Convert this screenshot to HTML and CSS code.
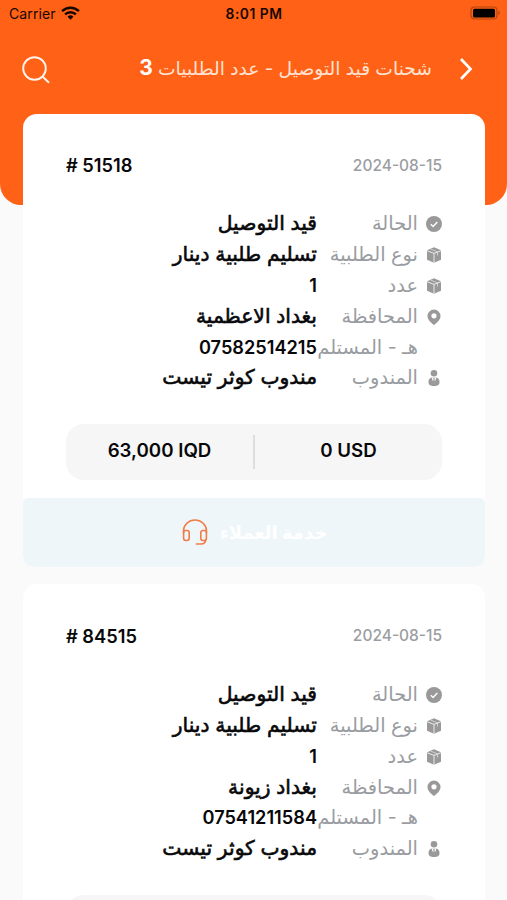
FILE: index.html
```html
<!DOCTYPE html>
<html lang="ar" dir="rtl">
<head>
<meta charset="utf-8">
<meta name="viewport" content="width=device-width">
<title>شحنات قيد التوصيل</title>
<link rel="stylesheet" href="styles.css">
</head>
<body>
<svg class="defs" aria-hidden="true">
  <symbol id="check" viewBox="0 0 16 16"><circle cx="8" cy="8" r="8" fill="#999"/><path d="M4.800 8.200l2.300 2.200 4.200-4.500" fill="none" stroke="#fff" stroke-width="1.400"/></symbol>
  <symbol id="box" viewBox="0 0 16 16"><path d="M8 .3L15 3.200v9.500L8 15.800 1 12.700V3.200z" fill="#999"/><path d="M1 3.700l7 2.700 7-2.700M8 6.400v9.400" fill="none" stroke="#f4f4f4" stroke-width=".9"/><path d="M4.500 2l7 2.900v3.600" fill="none" stroke="#ddd" stroke-width=".8"/></symbol>
  <symbol id="pin" viewBox="0 0 16 16"><path fill-rule="evenodd" d="M8 .5a6.500 6.500 0 0 1 6.500 6.500c0 4-3.800 7-6.500 9-2.700-2-6.500-5-6.500-9A6.500 6.500 0 0 1 8 .5zm0 3.700a2.600 2.600 0 1 0 0 5.200 2.600 2.600 0 0 0 0-5.200z" fill="#999"/></symbol>
  <symbol id="agent" viewBox="0 0 16 16"><circle cx="8" cy="3.300" r="3.300" fill="#999"/><path d="M5.700 7.500h4.600c2 .5 3.200 2 3.200 4.500 0 3-2 4-5.500 4s-5.500-1-5.500-4c0-2.500 1.200-4 3.200-4.500z" fill="#999"/><path d="M5.500 7.400L8 14l2.500-6.600z" fill="#fff"/><path d="M7.200 8h1.600l-.3 1.500.7 3.300L8 14.500l-1.200-1.700.7-3.300z" fill="#999"/></symbol>
</svg>

<header class="header">
  <div class="status" dir="ltr">
    <div class="carrier">Carrier
      <svg width="19" height="14" viewBox="0 0 19 14"><g fill="none" stroke="#160700" stroke-width="2.500"><path d="M1.100 5.100a12 12 0 0 1 16.800 0"/><path d="M4.100 8.400a7.800 7.800 0 0 1 10.800 0"/></g><path d="M6.500 10.700a4.300 4.300 0 0 1 6 0l-3 3.100z" fill="#160700"/></svg>
    </div>
    <div class="clock">8:01 PM</div>
    <svg class="battery" width="31" height="14" viewBox="0 0 31 14"><rect x="1" y="1" width="26" height="12" rx="3.500" fill="none" stroke="#b5450f" stroke-width="1.200"/><rect x="3" y="2.700" width="22" height="8.800" rx="1.500" fill="#000"/><path d="M28.500 4.800q2.600 2.200 0 4.400z" fill="#a34010"/></svg>
  </div>
  <div class="nav">
    <svg class="back" width="14" height="24" viewBox="0 0 14 24"><path d="M2 2l9.500 10L2 22" fill="none" stroke="#fff" stroke-width="2.700"/></svg>
    <h1 class="title">شحنات قيد التوصيل - عدد الطلبيات <b>3</b></h1>
    <svg class="search" width="28" height="28" viewBox="0 0 28 28"><g fill="none" stroke="#fff4ec" stroke-width="1.900"><circle cx="12.500" cy="12.500" r="11.300"/><path d="M20.500 20.500l6.500 6.300"/></g></svg>
  </div>
</header>

<main class="list">
  <article class="card">
    <div class="body">
      <div class="top"><time class="date">2024-08-15</time><strong class="num" dir="ltr"># 51518</strong></div>
      <dl class="rows">
        <div class="row"><svg class="icon"><use href="#check"/></svg><dt>الحالة</dt><dd>قيد التوصيل</dd></div>
        <div class="row"><svg class="icon"><use href="#box"/></svg><dt>نوع الطلبية</dt><dd>تسليم طلبية دينار</dd></div>
        <div class="row"><svg class="icon"><use href="#box"/></svg><dt>عدد</dt><dd class="digits">1</dd></div>
        <div class="row"><svg class="icon"><use href="#pin"/></svg><dt>المحافظة</dt><dd>بغداد الاعظمية</dd></div>
        <div class="row"><span></span><dt>هـ - المستلم</dt><dd class="digits">07582514215</dd></div>
        <div class="row"><svg class="icon"><use href="#agent"/></svg><dt>المندوب</dt><dd>مندوب كوثر تيست</dd></div>
      </dl>
      <div class="amounts" dir="ltr"><span>63,000 IQD</span><i class="divider"></i><span>0 USD</span></div>
    </div>
    <footer class="support">
      <span>خدمة العملاء</span>
      <svg width="26" height="26" viewBox="0 0 26 26"><g fill="none" stroke="#f27c48" stroke-width="1.600"><path d="M1.500 14V12a11.500 11 0 0 1 23 0v2"/><rect x="1.600" y="11.500" width="5.600" height="10" rx="2.200"/><rect x="18.800" y="11.500" width="5.600" height="10" rx="2.200"/><path d="M23.800 20c0 3.200-2 5-5 5h-5"/></g></svg>
    </footer>
  </article>

  <article class="card">
    <div class="body">
      <div class="top"><time class="date">2024-08-15</time><strong class="num" dir="ltr"># 84515</strong></div>
      <dl class="rows">
        <div class="row"><svg class="icon"><use href="#check"/></svg><dt>الحالة</dt><dd>قيد التوصيل</dd></div>
        <div class="row"><svg class="icon"><use href="#box"/></svg><dt>نوع الطلبية</dt><dd>تسليم طلبية دينار</dd></div>
        <div class="row"><svg class="icon"><use href="#box"/></svg><dt>عدد</dt><dd class="digits">1</dd></div>
        <div class="row"><svg class="icon"><use href="#pin"/></svg><dt>المحافظة</dt><dd>بغداد زيونة</dd></div>
        <div class="row"><span></span><dt>هـ - المستلم</dt><dd class="digits">07541211584</dd></div>
        <div class="row"><svg class="icon"><use href="#agent"/></svg><dt>المندوب</dt><dd>مندوب كوثر تيست</dd></div>
      </dl>
      <div class="amounts" dir="ltr"></div>
    </div>
  </article>
</main>
</body>
</html>
```
FILE: styles.css
```css
* { box-sizing: border-box; margin: 0; }
html { height: 900px; overflow: hidden; }
body {
  height: 900px;
  overflow: hidden;
  background: #fafafa;
  color: #08080a;
  font-family: Inter, "DejaVu Sans", sans-serif;
}
svg { display: block; flex: none; }
.defs { position: absolute; width: 0; height: 0; }

.header {
  height: 205px;
  background: #ff6116;
  border-radius: 0 0 21px 21px;
}
.status {
  display: grid;
  grid-template-columns: 1fr auto 1fr;
  align-items: center;
  height: 28px;
  padding: 0 6px 0 9px;
  color: #160700;
}
.carrier { display: flex; align-items: center; gap: 5px; font-size: 14px; letter-spacing: .1px; position: relative; top: -1px; }
.clock { margin-right: 2px; font-size: 13.800px; font-weight: 600; letter-spacing: .5px; }
.battery { justify-self: end; position: relative; top: -1px; }
.nav {
  display: flex;
  align-items: center;
  height: 82px;
  padding: 0 34px 0 22px;
}
.title {
  position: relative;
  top: -2px;
  margin-right: 27px;
  color: #ffe2d2;
  font-size: 18.700px;
  font-weight: 400;
  white-space: nowrap;
}
.title b { color: #fff; font-size: 21px; font-weight: 700; }
.search { margin-right: auto; position: relative; top: 1px; }

.list {
  display: grid;
  gap: 17px;
  margin: -91px 22px 0 23px;
  position: relative;
}
.card { background: #fff; border-radius: 14px 14px 10px 10px; overflow: hidden; }
.card + .card .body { padding-top: 37px; }
.body { padding: 36px 43px 18px; }
.top {
  display: flex;
  align-items: center;
  justify-content: space-between;
  height: 30px;
}
.date { color: #9b9da3; font-size: 15.500px; font-weight: 500; }
.num { font-size: 18.300px; font-weight: 600; }
.rows { margin-top: 28px; }
.row {
  display: grid;
  grid-template-columns: 24px 101px 1fr;
  align-items: center;
  height: 30.800px;
  line-height: 30px;
  white-space: nowrap;
}
.icon { width: 16px; height: 16px; position: relative; top: 1px; }
dt { color: #999ca1; font-size: 19.400px; }
dd { font-size: 20.300px; -webkit-text-stroke: .6px #08080a; }
dd.digits { font-size: 18.200px; font-weight: 600; -webkit-text-stroke: 0; }
.amounts {
  display: grid;
  grid-template-columns: 1fr 2px 1fr;
  align-items: center;
  height: 56px;
  margin-top: 31px;
  border-radius: 18px;
  background: #f6f6f6;
  font-size: 18.700px;
  line-height: 22px;
  font-weight: 600;
  text-align: center;
}
.amounts span { padding-bottom: 2px; }
.divider { height: 34px; background: #dedede; }
.support {
  display: flex;
  align-items: center;
  justify-content: center;
  gap: 12px;
  height: 69px;
  padding-left: 1px;
  border-radius: 5px 5px 10px 10px;
  background: #eff6f9;
  color: #fff;
  font-size: 18px;
  font-weight: 700;
}
```
